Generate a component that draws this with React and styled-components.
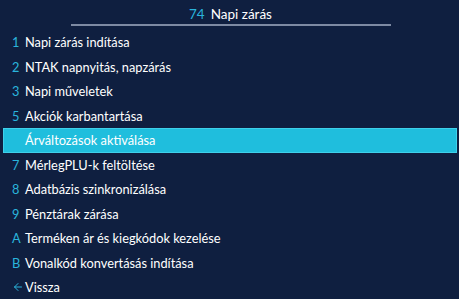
import React from 'react';
import styled, { createGlobalStyle } from 'styled-components';
import { ArrowLeft } from 'lucide-react';

const items = [
  { key: '1', label: 'Napi zárás indítása' },
  { key: '2', label: 'NTAK napnyitás, napzárás' },
  { key: '3', label: 'Napi műveletek' },
  { key: '5', label: 'Akciók karbantartása' },
  { key: '6', label: 'Árváltozások aktiválása', active: true },
  { key: '7', label: 'MérlegPLU-k feltöltése' },
  { key: '8', label: 'Adatbázis szinkronizálása' },
  { key: '9', label: 'Pénztárak zárása' },
  { key: 'A', label: 'Terméken ár és kiegkódok kezelése' },
  { key: 'B', label: 'Vonalkód konvertásás indítása' },
  { key: 'back', label: 'Vissza', icon: true },
];

const GlobalStyle = createGlobalStyle`
  html, body {
    margin: 0;
    padding: 0;
    background: #0f1f40;
  }
  body {
    font-family: Lato, "Noto Sans", sans-serif;
    color: #ffffff;
  }
`;

const Screen = styled.div`
  width: 459px;
  height: 299px;
  background: #0f1f40;
  overflow: hidden;
`;

const Header = styled.div`
  display: flex;
  justify-content: center;
  padding-top: 5px;
`;

const Title = styled.div`
  width: 320px;
  margin-left: 2px;
  display: flex;
  justify-content: center;
  align-items: baseline;
  gap: 6px;
  font-size: 13.5px;
  line-height: 19px;
  border-bottom: 2px solid #7d8aa3;
`;

const Code = styled.span`
  color: #2ab4dc;
`;

const Menu = styled.ul`
  list-style: none;
  margin: 0;
  padding: 4px 2px 0 3px;
`;

const Row = styled.li`
  height: 24.5px;
  box-sizing: border-box;
  display: flex;
  align-items: center;
  padding-left: 8px;
  font-size: 12.8px;
  background: ${(p) => (p.$active ? '#1fbedd' : 'transparent')};
  border: 1px solid ${(p) => (p.$active ? '#3fd0ea' : 'transparent')};
`;

const Key = styled.span`
  width: 13px;
  display: flex;
  align-items: center;
  color: ${(p) => (p.$active ? '#1fbedd' : '#2ab4dc')};
`;

const Label = styled.span`
  color: #ffffff;
`;

export default function App() {
  return (
    <Screen>
      <GlobalStyle />
      <Header>
        <Title>
          <Code>74</Code>
          <span>Napi zárás</span>
        </Title>
      </Header>
      <Menu>
        {items.map((it) => (
          <Row key={it.key} $active={it.active}>
            <Key $active={it.active}>
              {it.icon ? <ArrowLeft size={12} strokeWidth={2} /> : it.key}
            </Key>
            <Label>{it.label}</Label>
          </Row>
        ))}
      </Menu>
    </Screen>
  );
}
